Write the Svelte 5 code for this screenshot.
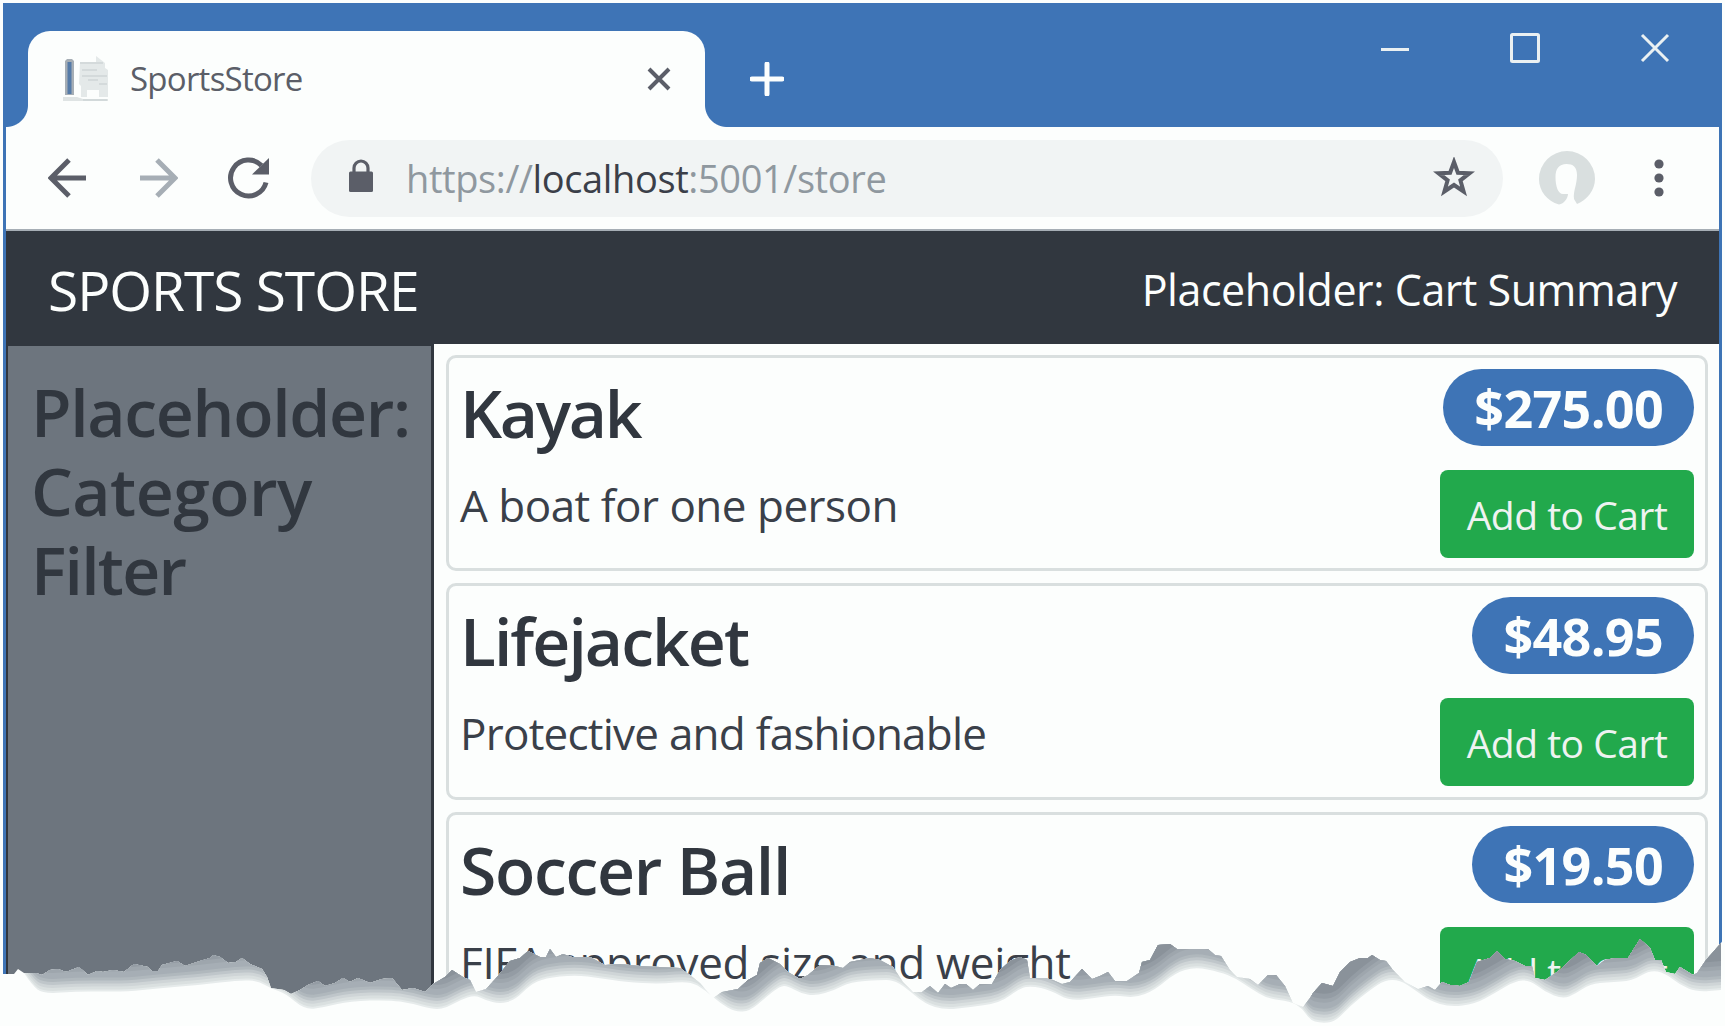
<script>
  const products = [
    { name: 'Kayak', about: 'A boat for one person', price: '$275.00', nameTrack: -2.3, aboutTrack: -0.5 },
    { name: 'Lifejacket', about: 'Protective and fashionable', price: '$48.95', nameTrack: -1.95, aboutTrack: -0.76 },
    { name: 'Soccer Ball', about: 'FIFA approved size and weight', price: '$19.50', nameTrack: -1.3, aboutTrack: -0.32 }
  ];

  // Jagged upper contour of the torn paper.
  const tear =
    '0,974 14,974 18,969 24,973 36,973 42,975 50,970 58,969 66,972 79,967 88,975 97,971 103,972 113,970 124,972 134,964 148,967 152,971 158,971 162,965 177,961 185,966 200,961 210,958 213,955 220,957 228,963 236,962 242,958 250,964 262,969 267,977 271,988 284,990 291,994 300,990 308,985 318,981 325,986 335,983 343,978 350,982 358,978 370,983 382,979 392,978 402,990 413,988 425,992 433,984 445,977 452,970 463,977 470,980 476,992 486,989 497,977 510,961 520,958 528,951 540,957 546,957 550,949 556,957 563,954 572,957 590,957 605,965 620,964 640,966 660,967 680,968 690,975 700,983 713,998 722,992 738,989 748,980 757,975 760,963 768,958 780,964 788,972 800,979 808,975 820,965 835,966 843,968 850,962 870,958 880,960 893,967 903,982 913,992 922,992 930,986 938,993 945,984 951,988 960,984 966,984 973,990 980,984 992,984 1000,970 1010,961 1020,957 1027,960 1030,978 1045,978 1053,980 1062,984 1070,982 1082,969 1092,979 1100,976 1108,972 1115,981 1127,981 1139,973 1142,962 1150,960 1158,945 1170,944 1177,949 1208,949 1215,955 1221,956 1230,970 1237,977 1250,979 1258,985 1268,975 1276,975 1285,986 1293,1003 1303,1007 1310,998 1313,993 1322,983 1333,986 1340,972 1350,962 1360,958 1368,958 1372,955 1380,960 1386,961 1393,970 1405,982 1418,989 1428,986 1435,990 1442,982 1450,985 1460,986 1469,982 1477,962 1490,958 1497,951 1505,959 1515,961 1525,966 1532,966 1535,978 1545,980 1557,972 1562,968 1579,952 1586,955 1597,966 1605,960 1615,958 1628,958 1640,939 1650,948 1655,960 1661,960 1666,972 1675,974 1680,967 1693,975 1697,973 1706,960 1721,943';

  // Soft lower contour of the shadow.
  const fold = [
    [24, 973], [32, 985], [43, 994], [80, 991], [125, 992], [160, 988], [200, 985], [240, 980], [258, 981], [272, 989], [285, 993], [305, 1010], [325, 1007], [350, 1001], [390, 1000], [410, 1003], [435, 1010], [448, 1007], [460, 1000], [475, 995], [485, 1000], [500, 1004], [515, 1000], [530, 985], [545, 978], [575, 975], [600, 978], [625, 982], [660, 984], [690, 981], [705, 990], [720, 1003], [735, 1012], [750, 1011], [765, 998], [780, 986], [788, 986], [800, 993], [815, 996], [835, 990], [850, 982], [880, 980], [893, 980], [905, 987], [925, 1004], [945, 1010], [970, 1007], [1000, 1003], [1020, 988], [1032, 986], [1050, 990], [1070, 1001], [1095, 998], [1115, 995], [1135, 998], [1155, 990], [1175, 973], [1195, 967], [1220, 972], [1235, 978], [1250, 988], [1268, 999], [1290, 1001], [1302, 1008], [1310, 1020], [1320, 1023], [1335, 1022], [1350, 1006], [1370, 990], [1385, 980], [1400, 980], [1415, 990], [1430, 1001], [1450, 1007], [1475, 1004], [1495, 993], [1515, 981], [1530, 980], [1545, 992], [1563, 999], [1575, 994], [1590, 984], [1610, 982], [1632, 981], [1650, 970], [1665, 973], [1680, 985], [1697, 992], [1721, 990]
  ];

  // Shadow tones, from the pale outer edge up to the darkest part of the tear.
  const shades = [
    { lift: 0, fill: '#e6ebeb' },
    { lift: 2, fill: '#dae0e0' },
    { lift: 5, fill: '#cfd5d7' },
    { lift: 8, fill: '#bfc6ca' },
    { lift: 11, fill: '#b0b8bd' },
    { lift: 14, fill: '#a6aeb5' },
    { lift: 20, fill: '#9ea6ad' },
    { lift: 24, fill: '#949ca4' },
    { lift: 29, fill: '#8a929a' }
  ];

  function band(lift) {
    const p = fold.map(([x, y]) => [x, y - lift]);
    let d = `M${p[0][0]} 900L${p[0][0]} ${p[0][1]}`;
    for (let i = 1; i < p.length - 1; i++) {
      d += `Q${p[i][0]} ${p[i][1]} ${(p[i][0] + p[i + 1][0]) / 2} ${(p[i][1] + p[i + 1][1]) / 2}`;
    }
    return d + `L1721 ${p[p.length - 1][1]}V900Z`;
  }
</script>

<div class="page">
  <div class="window">
    <header class="titlebar">
      <div class="tab">
        <svg class="favicon" viewBox="0 0 46 46">
          <path d="M0 41H14L20 43H45V45H0Z" fill="#dfe4e4" />
          <path d="M2 5L4 3H9L11 5V39H2Z" fill="#a6aeb5" />
          <path d="M4.500 6H8.500V38H4.500Z" fill="#557ba8" />
          <path d="M17 6H33V0L42 7V12L45 14V41H36V34H24V41H18V30L16 28Z" fill="#e4e9e9" />
          <path d="M17 7H40M19 14H34M19 20H44M25 24H35M36 28H44M20 44H44" stroke="#ced5d6" stroke-width="1.600" fill="none" />
        </svg>
        <span class="tab-title">SportsStore</span>
        <svg class="tab-close" viewBox="0 0 24 24"><path d="M2 2L22 22M22 2L2 22" /></svg>
      </div>
      <svg class="new-tab" viewBox="0 0 34 34"><path d="M17 2V32M2 17H32" /></svg>
      <div class="controls">
        <svg viewBox="0 0 30 30"><path d="M1 16.500H29" /></svg>
        <svg viewBox="0 0 30 30"><rect x="1.500" y="1.500" width="27" height="27" rx="1" /></svg>
        <svg viewBox="0 0 30 30"><path d="M2 2L28 28M28 2L2 28" /></svg>
      </div>
    </header>

    <nav class="toolbar">
      <svg class="nav-icon" viewBox="0 0 40 40"><path d="M38 20H3M21 2L3 20L21 38" /></svg>
      <svg class="nav-icon faded" viewBox="0 0 40 40"><path d="M2 20H37M19 2L37 20L19 38" /></svg>
      <svg class="nav-icon reload" viewBox="0 0 42 42">
        <path d="M38 25.500A18 18 0 1 1 33.500 8.500" />
        <path class="solid" d="M41 1V17.500H24Z" />
      </svg>
      <div class="address">
        <svg class="lock" viewBox="0 0 24 34">
          <path d="M5 14V9A7 7 0 0 1 19 9V14" fill="none" stroke="#5b5e68" stroke-width="3.200" />
          <rect y="12.500" width="24" height="20.500" rx="1.500" fill="#5b5e68" />
        </svg>
        <span class="url">https://<b>localhost</b>:5001/store</span>
        <svg class="star" viewBox="0 0 42 42">
          <path d="M21 5L24.900 15.800L36.500 16.200L27.400 23.300L30.600 34.500L21 28L11.400 34.500L14.600 23.300L5.500 16.200L17.100 15.800Z" />
        </svg>
      </div>
      <svg class="avatar" viewBox="0 0 56 54">
        <path d="M20 53.500C8 50 0 40 0 28A28 28 0 0 1 56 28C56 39 48 49 38 53L35 48C34 40 38 34 38 24C38 16 34 13 27.500 13C20 13 16.500 18 16.500 26C16.500 35 19 43 24 43H29C29 47 25 53 20 53.500Z" />
      </svg>
      <svg class="more" viewBox="0 0 10 38">
        <circle cx="5" cy="5" r="4.600" /><circle cx="5" cy="19" r="4.600" /><circle cx="5" cy="33" r="4.600" />
      </svg>
    </nav>

    <div class="banner">
      <span class="brand">SPORTS STORE</span>
      <span class="summary">Placeholder: Cart Summary</span>
    </div>

    <div class="content">
      <aside>
        <h2><span class="l1">Placeholder:</span> <span class="l2">Category</span> <span class="l3">Filter</span></h2>
      </aside>
      <main>
        {#each products as item}
          <article>
            <div class="info">
              <h3 style:letter-spacing="{item.nameTrack}px">{item.name}</h3>
              <p style:letter-spacing="{item.aboutTrack}px">{item.about}</p>
            </div>
            <div class="buy">
              <span class="price">{item.price}</span>
              <button>Add to Cart</button>
            </div>
          </article>
        {/each}
      </main>
    </div>
  </div>

  <svg class="torn" viewBox="0 900 1725 126">
    <defs>
      <clipPath id="below-tear"><polygon points="{tear} 1721,1026 0,1026" /></clipPath>
    </defs>
    <polygon class="paper" points="{tear} 1725,937 1725,1026 0,1026" />
    <g clip-path="url(#below-tear)">
      {#each shades as s}
        <path fill={s.fill} d={band(s.lift)} />
      {/each}
    </g>
  </svg>
</div>

<style>
  :global(body) {
    background: #fcfefd;
    overflow: hidden;
  }
  .page {
    position: relative;
    box-sizing: border-box;
    width: 1725px;
    height: 1026px;
    padding: 3px 3px 0;
    overflow: hidden;
    background: #fcfefd;
    font-family: 'Open Sans', 'Noto Sans', sans-serif;
    color: #31373f;
  }
  .window {
    box-sizing: border-box;
    height: 1023px;
    border: solid #3e74b6;
    border-width: 0 3px;
    overflow: hidden;
    display: flex;
    flex-direction: column;
  }
  svg {
    display: block;
    flex: none;
  }
  .titlebar {
    flex: none;
    display: flex;
    align-items: flex-start;
    height: 124px;
    background: #3e74b6;
  }
  .tab {
    position: relative;
    box-sizing: border-box;
    display: flex;
    align-items: center;
    width: 677px;
    height: 96px;
    margin: 28px 0 0 22px;
    padding: 0 34px 0 35px;
    border-radius: 22px 22px 0 0;
    background: #fcfefd;
  }
  .tab::before,
  .tab::after {
    content: '';
    position: absolute;
    bottom: 0;
    width: 22px;
    height: 22px;
  }
  .tab::before {
    right: 100%;
    background: radial-gradient(circle at 0 0, transparent 21.5px, #fcfefd 22.5px);
  }
  .tab::after {
    left: 100%;
    background: radial-gradient(circle at 100% 0, transparent 21.5px, #fcfefd 22.5px);
  }
  .favicon {
    width: 46px;
    height: 46px;
  }
  .tab-title {
    flex: 1;
    margin-left: 21px;
    font-size: 33px;
    line-height: 44px;
    letter-spacing: -0.75px;
    color: #5b5e68;
  }
  .tab-close {
    width: 24px;
    height: 24px;
    fill: none;
    stroke: #5b5e68;
    stroke-width: 4;
  }
  .new-tab {
    width: 34px;
    height: 34px;
    margin: 59px 0 0 45px;
    fill: none;
    stroke: #fcfefd;
    stroke-width: 5;
    stroke-linecap: round;
  }
  .controls {
    display: flex;
    gap: 100px;
    margin: 30px 49px 0 auto;
  }
  .controls svg {
    width: 30px;
    height: 30px;
    fill: none;
    stroke: #eaf0f2;
    stroke-width: 3;
  }
  .toolbar {
    flex: none;
    box-sizing: border-box;
    display: flex;
    align-items: center;
    height: 104px;
    padding: 0 55px 0 42px;
    border-bottom: 2px solid #a6aeb5;
    background: #fcfefd;
  }
  .nav-icon {
    width: 40px;
    height: 40px;
    margin-right: 50px;
    fill: none;
    stroke: #5b5e68;
    stroke-width: 5;
  }
  .faded {
    stroke: #a6aeb5;
  }
  .reload {
    width: 42px;
    height: 42px;
    margin-right: 41px;
  }
  .reload .solid {
    fill: #5b5e68;
    stroke: none;
  }
  .address {
    box-sizing: border-box;
    display: flex;
    align-items: center;
    width: 1192px;
    height: 77px;
    padding: 0 28px 0 38px;
    border-radius: 39px;
    background: #f1f4f4;
  }
  .lock {
    width: 24px;
    height: 34px;
    margin-bottom: 4px;
  }
  .url {
    flex: 1;
    margin-left: 33px;
    font-size: 38px;
    line-height: 52px;
    letter-spacing: -0.38px;
    color: #8f989f;
  }
  .url b {
    font-weight: 400;
    color: #3b3f49;
  }
  .star {
    width: 42px;
    height: 42px;
    fill: none;
    stroke: #5b5e68;
    stroke-width: 4;
  }
  .avatar {
    width: 56px;
    height: 54px;
    margin: 0 0 1px 36px;
    fill: #d9dfdf;
  }
  .more {
    width: 10px;
    height: 38px;
    margin-left: auto;
    fill: #5b5e68;
  }
  .banner {
    flex: none;
    box-sizing: border-box;
    display: flex;
    align-items: center;
    justify-content: space-between;
    height: 113px;
    padding: 4px 42px 0 42px;
    background: #31373f;
    color: #fcfefd;
  }
  .brand {
    font-size: 55px;
    line-height: 70px;
    letter-spacing: -1px;
  }
  .summary {
    font-size: 43px;
    line-height: 60px;
    letter-spacing: -0.45px;
  }
  .content {
    flex: 1;
    display: flex;
    min-height: 0;
  }
  aside {
    flex: none;
    box-sizing: border-box;
    width: 428px;
    padding: 26px 0 0 23px;
    border: solid #31373f;
    border-width: 2px 3px 0 2px;
    background: #6d757e;
  }
  h2,
  h3 {
    margin: 0;
    font-size: 66px;
    font-weight: 600;
    line-height: 79px;
  }
  h2 span {
    display: block;
  }
  .l1 {
    letter-spacing: -1.3px;
  }
  .l2 {
    letter-spacing: -0.5px;
  }
  .l3 {
    letter-spacing: -1.7px;
  }
  main {
    flex: 1;
    display: flex;
    flex-direction: column;
    gap: 12px;
    padding: 11px 11px 0 12px;
    background: #fcfefd;
  }
  article {
    flex: none;
    box-sizing: border-box;
    display: flex;
    justify-content: space-between;
    height: 216.300px;
    padding: 11px 11px 0;
    border: 3px solid #d9dfdf;
    border-radius: 10px;
  }
  .info {
    padding-top: 4px;
  }
  p {
    margin: 20px 0 0;
    font-size: 44px;
    line-height: 66px;
    color: #3a4049;
  }
  .buy {
    display: flex;
    flex-direction: column;
    align-items: flex-end;
    gap: 24px;
  }
  .price {
    padding: 0 31px 0 31px;
    border-radius: 39px;
    background: #3e74b6;
    color: #fcfefd;
    font-size: 52px;
    font-weight: 700;
    line-height: 77px;
    letter-spacing: -0.65px;
  }
  button {
    width: 254px;
    height: 88px;
    padding: 2px 0 0;
    border: 0;
    border-radius: 8px;
    background: #22a94c;
    color: #eef3f1;
    font-family: inherit;
    font-size: 39px;
    line-height: 86px;
    letter-spacing: -0.5px;
  }
  .torn {
    position: absolute;
    left: 0;
    bottom: 0;
    width: 1725px;
    height: 126px;
  }
  .paper {
    fill: #fcfefd;
  }
</style>
